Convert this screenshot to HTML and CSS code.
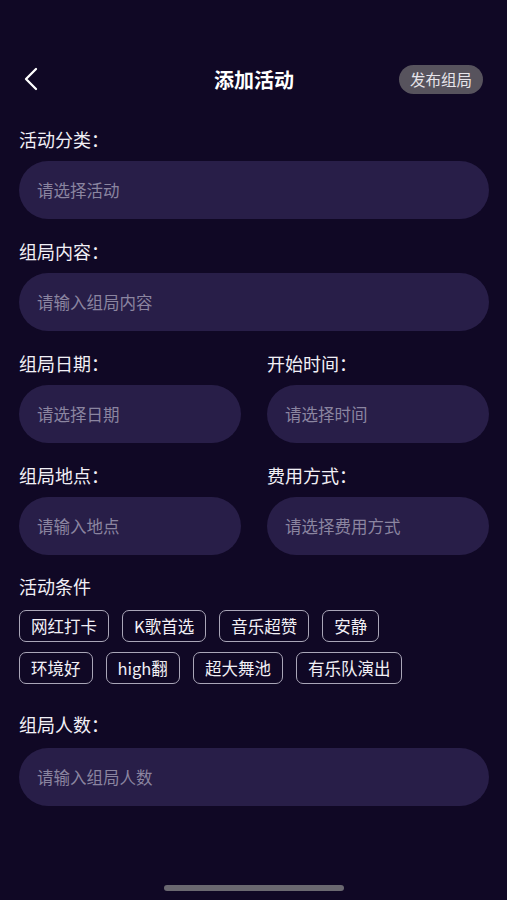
FILE: index.html
```html
<!DOCTYPE html>
<html lang="zh">
<head>
<meta charset="utf-8">
<link rel="stylesheet" href="styles.css">
</head>
<body>
<div class="page">
  <header class="nav">
    <svg class="back" width="16" height="24" viewBox="0 0 16 24"><path d="M13 2 L3 12 L13 22" fill="none" stroke="#ffffff" stroke-width="2.3" stroke-linecap="round" stroke-linejoin="round"/></svg>
    <div class="title">添加活动</div>
    <div class="publish">发布组局</div>
  </header>

  <div class="field">
    <div class="label">活动分类：</div>
    <div class="input">请选择活动</div>
  </div>
  <div class="field">
    <div class="label">组局内容：</div>
    <div class="input">请输入组局内容</div>
  </div>
  <div class="pair">
    <div class="field">
      <div class="label">组局日期：</div>
      <div class="input">请选择日期</div>
    </div>
    <div class="field">
      <div class="label">开始时间：</div>
      <div class="input">请选择时间</div>
    </div>
  </div>
  <div class="pair">
    <div class="field">
      <div class="label">组局地点：</div>
      <div class="input">请输入地点</div>
    </div>
    <div class="field">
      <div class="label">费用方式：</div>
      <div class="input">请选择费用方式</div>
    </div>
  </div>

  <div class="cond">
    <div class="label">活动条件</div>
    <div class="tags">
      <span class="tag">网红打卡</span>
      <span class="tag">K歌首选</span>
      <span class="tag">音乐超赞</span>
      <span class="tag">安静</span>
    </div>
    <div class="tags">
      <span class="tag">环境好</span>
      <span class="tag">high翻</span>
      <span class="tag">超大舞池</span>
      <span class="tag">有乐队演出</span>
    </div>
  </div>

  <div class="field count">
    <div class="label">组局人数：</div>
    <div class="input">请输入组局人数</div>
  </div>

  <div class="home-bar"></div>
</div>
</body>
</html>
```

FILE: styles.css
```css
* { box-sizing: border-box; }
html, body {
  margin: 0;
  padding: 0;
  background: #100825;
}
body {
  font-family: "Noto Sans CJK SC", "Noto Sans", sans-serif;
  color: #f2f0f6;
}
.page {
  width: 507px;
  height: 900px;
  position: relative;
  padding: 56px 18px 0 19px;
}
.nav {
  height: 50px;
  display: flex;
  align-items: center;
  justify-content: space-between;
  position: relative;
  margin-bottom: 21px;
}
.back { margin-left: 4px; margin-top: -4px; }
.title {
  position: absolute;
  left: 0;
  right: 0;
  top: 10px;
  text-align: center;
  font-size: 20px;
  line-height: 28px;
  font-weight: 700;
  color: #ffffff;
  pointer-events: none;
}
.publish {
  background: #57535d;
  color: #e6e4ea;
  font-size: 15.5px;
  height: 29px;
  line-height: 29px;
  padding: 0 11px;
  border-radius: 15px;
  margin-right: 6px;
  margin-top: -4px;
}
.field { margin-bottom: 20px; }
.label {
  font-size: 18px;
  line-height: 24px;
  height: 24px;
  color: #f2f0f6;
}
.field .label { margin-bottom: 10px; }
.input {
  height: 58px;
  border-radius: 29px;
  background: #281e48;
  color: #8b85a0;
  font-size: 16.5px;
  line-height: 58px;
  padding-left: 18px;
}
.pair {
  display: grid;
  grid-template-columns: 222px 222px;
  column-gap: 26px;
}
.cond { margin-top: -1px; }
.cond .label { margin-bottom: 12px; }
.tags {
  display: flex;
  gap: 13px;
  margin-bottom: 10px;
}
.tag {
  height: 32px;
  line-height: 30px;
  border: 1px solid #aaa6b8;
  border-radius: 7px;
  padding: 0 11px;
  font-size: 16.5px;
  color: #f2f0f6;
}
.count { margin-top: 28px; }
.count .label { margin-bottom: 12px; }
.home-bar {
  position: absolute;
  left: 164px;
  top: 885px;
  width: 180px;
  height: 6px;
  border-radius: 3px;
  background: #6a6870;
}
```
